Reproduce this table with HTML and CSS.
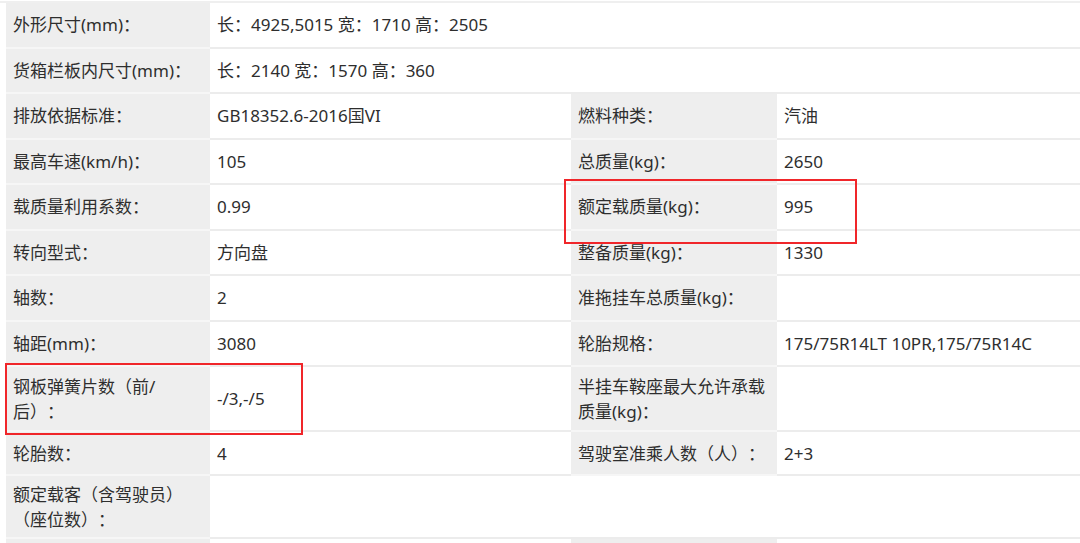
FILE: index.html
```html
<!DOCTYPE html>
<html lang="zh-CN">
<head>
<meta charset="utf-8">
<title>参数</title>
<link rel="stylesheet" href="styles.css">
</head>
<body>
<div class="sheet">
  <div class="row">
    <div class="lab">外形尺寸(mm)：</div>
    <div class="val wide">长：4925,5015 宽：1710 高：2505</div>
  </div>
  <div class="row">
    <div class="lab">货箱栏板内尺寸(mm)：</div>
    <div class="val wide">长：2140 宽：1570 高：360</div>
  </div>
  <div class="row">
    <div class="lab">排放依据标准：</div>
    <div class="val">GB18352.6-2016国VI</div>
    <div class="lab lab2">燃料种类：</div>
    <div class="val">汽油</div>
  </div>
  <div class="row">
    <div class="lab">最高车速(km/h)：</div>
    <div class="val">105</div>
    <div class="lab lab2">总质量(kg)：</div>
    <div class="val">2650</div>
  </div>
  <div class="row">
    <div class="lab">载质量利用系数：</div>
    <div class="val">0.99</div>
    <div class="lab lab2">额定载质量(kg)：</div>
    <div class="val">995</div>
  </div>
  <div class="row">
    <div class="lab">转向型式：</div>
    <div class="val">方向盘</div>
    <div class="lab lab2">整备质量(kg)：</div>
    <div class="val">1330</div>
  </div>
  <div class="row">
    <div class="lab">轴数：</div>
    <div class="val">2</div>
    <div class="lab lab2">准拖挂车总质量(kg)：</div>
    <div class="val"></div>
  </div>
  <div class="row">
    <div class="lab">轴距(mm)：</div>
    <div class="val">3080</div>
    <div class="lab lab2">轮胎规格：</div>
    <div class="val">175/75R14LT 10PR,175/75R14C</div>
  </div>
  <div class="row">
    <div class="lab">钢板弹簧片数（前/后）：</div>
    <div class="val">-/3,-/5</div>
    <div class="lab lab2">半挂车鞍座最大允许承载质量(kg)：</div>
    <div class="val"></div>
  </div>
  <div class="row short">
    <div class="lab">轮胎数：</div>
    <div class="val">4</div>
    <div class="lab lab2">驾驶室准乘人数（人）：</div>
    <div class="val">2+3</div>
  </div>
  <div class="row tight">
    <div class="lab">额定载客（含驾驶员）（座位数）：</div>
    <div class="val wide"></div>
  </div>
  <div class="row">
    <div class="lab"></div>
    <div class="val"></div>
    <div class="lab lab2"></div>
    <div class="val"></div>
  </div>
  <div class="mark mark-load"></div>
  <div class="mark mark-spring"></div>
</div>
</body>
</html>
```

FILE: styles.css
```css
html, body {
  margin: 0;
  padding: 0;
  background: #ffffff;
  overflow: hidden;
}

.sheet {
  position: relative;
  margin-top: 1px;
  padding-left: 6px;
  width: 1120px;
  border-top: 2px solid #efefef;
  font-family: "Noto Sans", "Noto Sans CJK SC", sans-serif;
  font-size: 17px;
  color: #2e2e2e;
  text-spacing-trim: space-all;
}

.row {
  display: grid;
  grid-template-columns: 204px 361px 206px 343px;
}

.lab,
.val {
  box-sizing: border-box;
  min-height: 45.5px;
  padding: 6.5px 7px;
  line-height: 25px;
  display: flex;
  align-items: center;
  border-bottom: 2px solid #ececec;
}

.lab {
  background: #eeeeee;
  border-bottom-color: #f6f6f6;
}

.val {
  background: #ffffff;
}

.wide {
  grid-column: 2 / 5;
}

.short .lab,
.short .val {
  min-height: 44px;
}

.tight .lab,
.tight .val {
  padding-top: 6px;
  padding-bottom: 5px;
}

.mark {
  position: absolute;
  box-sizing: border-box;
  border: 2px solid #f0262a;
}

.mark-load {
  left: 564px;
  top: 176px;
  width: 293px;
  height: 65px;
}

.mark-spring {
  left: 5px;
  top: 360px;
  width: 298px;
  height: 72px;
}
```
